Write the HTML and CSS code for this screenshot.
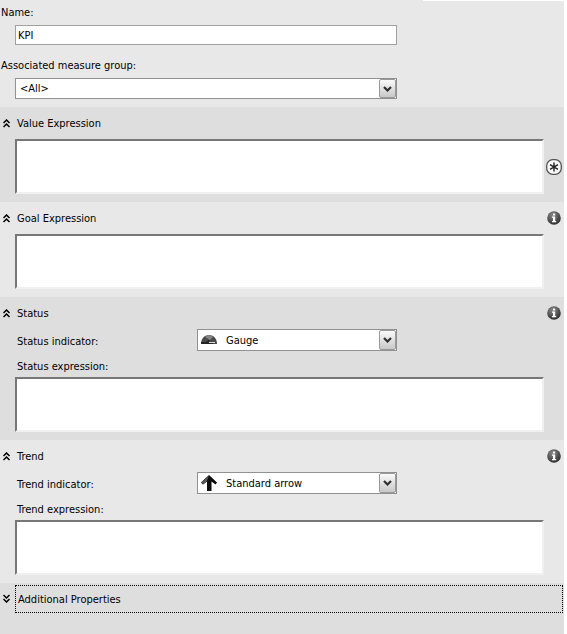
FILE: index.html
```html
<!DOCTYPE html>
<html lang="en">
<head>
  <meta charset="UTF-8">
  <title>KPI</title>
  <link rel="stylesheet" href="styles.css">
</head>
<body>
  <!-- Shared icons -->
  <svg class="defs" width="0" height="0">
    <symbol id="chevrons" viewBox="0 0 8 9">
      <path d="M0.500 4L3.500 1L6.500 4M0.500 8L3.500 5L6.500 8" fill="none" stroke="#000" stroke-width="1.500"/>
    </symbol>
    <symbol id="arrow" viewBox="0 0 9 6">
      <path d="M1 1L4.500 4.500L8 1" fill="none" stroke="#303030" stroke-width="2.200"/>
    </symbol>
    <radialGradient id="ball" cx="0.4" cy="0.3" r="0.7">
      <stop offset="0" stop-color="#8a8a8a"/>
      <stop offset="1" stop-color="#303030"/>
    </radialGradient>
    <symbol id="info" viewBox="0 0 14 14">
      <circle cx="7" cy="7" r="6.800" fill="url(#ball)"/>
      <path d="M6 2.500h2.200v2H6zM5 5.500h3.200v4.500h1v1.200H5V10h1V6.700H5z" fill="#fff"/>
    </symbol>
  </svg>

  <form class="panel">
    <div class="section general">
      <label for="name">Name:</label>
      <input type="text" id="name" value="KPI">
      <label for="group">Associated measure group:</label>
      <div class="combo">
        <select id="group"><option>&lt;All&gt;</option></select>
        <span class="drop"><svg width="9" height="6"><use href="#arrow"/></svg></span>
      </div>
    </div>

    <div class="section dark">
      <div class="header">
        <button type="button" class="toggle"><svg width="8" height="9"><use href="#chevrons"/></svg>Value Expression</button>
      </div>
      <div class="editor">
        <textarea aria-label="Value expression"></textarea>
        <button type="button" class="icon" aria-label="Required">
          <svg width="16" height="16" viewBox="0 0 16 16">
            <rect x="0.700" y="0.700" width="14.600" height="14.600" rx="6" fill="#f8f8f8" stroke="#555" stroke-width="1.300"/>
            <path d="M8 3.500v9M4 5.700l8 4.600M12 5.700l-8 4.600" stroke="#222" stroke-width="1.400"/>
          </svg>
        </button>
      </div>
    </div>

    <div class="section">
      <div class="header">
        <button type="button" class="toggle"><svg width="8" height="9"><use href="#chevrons"/></svg>Goal Expression</button>
        <button type="button" class="icon" aria-label="Goal information"><svg width="14" height="14"><use href="#info"/></svg></button>
      </div>
      <div class="editor">
        <textarea aria-label="Goal expression"></textarea>
      </div>
    </div>

    <div class="section dark">
      <div class="header">
        <button type="button" class="toggle"><svg width="8" height="9"><use href="#chevrons"/></svg>Status</button>
        <button type="button" class="icon" aria-label="Status information"><svg width="14" height="14"><use href="#info"/></svg></button>
      </div>
      <div class="row">
        <label for="statusIndicator">Status indicator:</label>
        <div class="combo indicator">
          <svg class="picture" width="16" height="16" viewBox="0 0 16 16">
            <path d="M0 12C0 7 3 3 8 3s8 4 8 9z" fill="#4a4a4a"/>
            <path d="M4 5C6 2.600 10 2.600 12 5L9 8z" fill="#858585"/>
            <path d="M0 10h5l3-2 1 2h3v2H0z" fill="#252525"/>
            <path d="M8 10.500h6" fill="none" stroke="#ddd"/>
          </svg>
          <select id="statusIndicator"><option>Gauge</option></select>
          <span class="drop"><svg width="9" height="6"><use href="#arrow"/></svg></span>
        </div>
      </div>
      <label class="caption" for="statusExpression">Status expression:</label>
      <div class="editor">
        <textarea id="statusExpression"></textarea>
      </div>
    </div>

    <div class="section">
      <div class="header">
        <button type="button" class="toggle"><svg width="8" height="9"><use href="#chevrons"/></svg>Trend</button>
        <button type="button" class="icon" aria-label="Trend information"><svg width="14" height="14"><use href="#info"/></svg></button>
      </div>
      <div class="row">
        <label for="trendIndicator">Trend indicator:</label>
        <div class="combo indicator">
          <svg class="picture" width="16" height="16" viewBox="0 0 16 16">
            <path d="M8 0L16 7.500L14.500 9.500L10.500 6.500V16H6V6.500L2 9.500L0 7.500z" fill="#0c0c0c"/>
            <path d="M8 0.500L6 6L2 9.500L0 7.500z" fill="#555"/>
          </svg>
          <select id="trendIndicator"><option>Standard arrow</option></select>
          <span class="drop"><svg width="9" height="6"><use href="#arrow"/></svg></span>
        </div>
      </div>
      <label class="caption" for="trendExpression">Trend expression:</label>
      <div class="editor">
        <textarea id="trendExpression"></textarea>
      </div>
    </div>

    <div class="section dark additional">
      <button type="button" class="toggle closed"><svg width="8" height="9"><use href="#chevrons"/></svg><span>Additional Properties</span></button>
    </div>
  </form>
</body>
</html>
```

FILE: styles.css
```css
* { box-sizing: border-box; }

body {
  margin: 0;
  background: #fff;
  font: 11px/16px "DejaVu Sans Condensed", "Noto Sans", sans-serif;
  color: #000;
}

button, input, select, textarea { font: inherit; color: inherit; }
svg { display: block; flex: none; }
.defs { position: absolute; }

.panel {
  display: flex;
  flex-direction: column;
  min-height: 100vh;
  margin-right: 3px;
  position: relative;
}

/* white edge over the right part of the top */
.panel::before {
  content: "";
  position: absolute;
  top: 0;
  right: 0;
  width: 25%;
  height: 1px;
  background: #fff;
}

.section { background: #e8e8e8; padding-bottom: 8px; }
.section.dark { background: #dedede; }

.general { padding-top: 5px; }
.general label { display: block; padding-left: 1px; }

input {
  display: block;
  width: 100%;
  max-width: 382px;
  height: 20px;
  margin: 4px 0 13px 15px;
  padding: 0 2px;
  border: 1px solid #a0a0a0;
  background: #fff;
}

.combo {
  position: relative;
  max-width: 382px;
  height: 21px;
  margin: 4px 0 0 15px;
}

select {
  display: block;
  width: 100%;
  height: 100%;
  padding: 1px 20px 0 4px;
  border: 1px solid #919191;
  border-radius: 0;
  background: #fff;
  appearance: none;
}

.drop {
  position: absolute;
  top: 1px;
  right: 1px;
  bottom: 1px;
  width: 17px;
  display: flex;
  align-items: center;
  justify-content: center;
  border: 1px solid #999;
  border-radius: 2px;
  background: linear-gradient(#fafafa, #c8c8c8);
  pointer-events: none;
}

.header {
  display: flex;
  align-items: center;
  justify-content: space-between;
  height: 32px;
  padding-right: 3px;
}

.toggle {
  display: flex;
  align-items: center;
  gap: 6px;
  padding: 2px 0 0 3px;
  border: 0;
  background: none;
  text-align: left;
}

.toggle svg { margin-bottom: 2px; }

.icon {
  padding: 0;
  border: 0;
  background: none;
}

.editor {
  display: flex;
  align-items: center;
  gap: 2px;
  padding-left: 15px;
}

textarea {
  flex: none;
  width: calc(100% - 20px);
  height: 55px;
  border: 2px solid;
  border-color: #777 #f0f0f0 #f0f0f0 #777;
  background: #fff;
  resize: none;
}

.row {
  display: flex;
  align-items: center;
  padding-left: 17px;
}

.row label { width: 180px; padding-top: 4px; }

.indicator {
  width: 200px;
  height: 22px;
  margin: 0;
}

.indicator select { padding: 2px 20px 0 28px; }

.picture {
  position: absolute;
  top: 3px;
  left: 4px;
}

.caption {
  display: block;
  height: 26px;
  padding: 8px 0 0 17px;
}

.additional {
  flex: 1;
  padding: 2px 1px 8px 0;
}

.closed { width: 100%; gap: 4px; padding-top: 0; }
.closed svg { transform: scaleY(-1); }

.closed span {
  flex: 1;
  height: 28px;
  padding: 6px 2px 0;
  border: 1px dotted #000;
}
```
